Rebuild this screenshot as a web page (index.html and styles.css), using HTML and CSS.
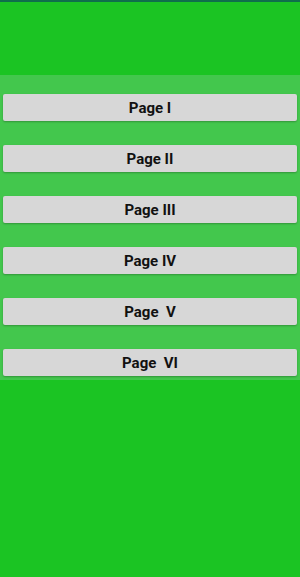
FILE: index.html
```html
<!DOCTYPE html>
<html lang="en">
<head>
    <meta charset="UTF-8">
    <meta name="viewport" content="width=device-width, initial-scale=1.0">
    <title>Pages</title>
    <link rel="stylesheet" href="styles.css">
</head>
<body>
    <div class="status-line"></div>
    <div class="header"></div>
    <div class="menu">
        <a class="btn">Page I</a>
        <a class="btn">Page II</a>
        <a class="btn">Page III</a>
        <a class="btn">Page IV</a>
        <a class="btn">Page&nbsp; V</a>
        <a class="btn">Page&nbsp; VI</a>
    </div>
</body>
</html>
```

FILE: styles.css
```css
*{
    box-sizing: border-box;
    margin: 0px;
    padding: 0px;
}
body{
    width: 300px;
    height: 577px;
    background: #1bc423;
    font-family: Roboto, "Liberation Sans", sans-serif;
    overflow: hidden;
}
.status-line{
    height: 2px;
    background: #0f6e4c;
}
.header{
    height: 73px;
}
.menu{
    display: flex;
    flex-direction: column;
    gap: 24px;
    padding: 19px 3px 4px 3px;
    background: #43c74d;
}
.btn{
    display: flex;
    justify-content: center;
    align-items: center;
    height: 27px;
    background: #d7d7d7;
    color: #111;
    font-size: 15px;
    font-weight: bold;
    border-radius: 2px;
    box-shadow: 0 1px 2px rgba(0, 0, 0, .25);
    cursor: pointer;
}
```
